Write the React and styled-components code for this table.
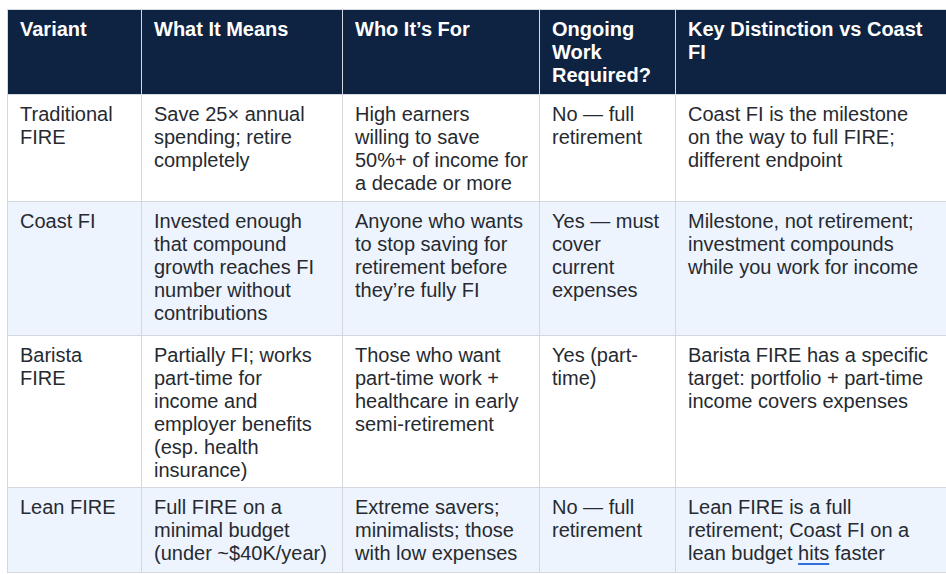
import React from 'react'
import styled, { createGlobalStyle } from 'styled-components'

const GlobalStyle = createGlobalStyle`
  html, body {
    margin: 0;
    padding: 0;
    background: #ffffff;
    overflow: hidden;
  }
  body {
    font-family: "Liberation Sans", Arial, sans-serif;
  }
`

const COLS = '134px 201px 197px 136px 275px'

const Page = styled.div`
  padding: 9px 0 0 7px;
  width: 1000px;
`

const Table = styled.div`
  display: flex;
  flex-direction: column;
  width: max-content;
  border-top: 1px solid #d3d7de;
  border-left: 1px solid #d3d7de;
`

const Row = styled.div`
  display: grid;
  grid-template-columns: ${COLS};
  height: ${(p) => p.$h}px;
  background: ${(p) => (p.$head ? '#0e2341' : p.$alt ? '#eef4fd' : '#ffffff')};
`

const Cell = styled.div`
  box-sizing: border-box;
  padding: 8px 12px 0 12px;
  border-right: 1px solid #d3d7de;
  border-bottom: 1px solid #d3d7de;
  font-size: 20px;
  line-height: 23px;
  color: #262a31;

  &:nth-child(3) {
    padding-right: 10px;
  }

  &:last-child {
    padding-right: 19px;
  }
`

const HeadCell = styled(Cell)`
  color: #ffffff;
  font-weight: 700;
`

const Flagged = styled.span`
  text-decoration: underline;
  text-decoration-color: #2f6fe0;
  text-decoration-thickness: 2px;
  text-underline-offset: 3px;
`

const headers = [
  'Variant',
  'What It Means',
  'Who It’s For',
  'Ongoing Work Required?',
  'Key Distinction vs Coast FI',
]

const rows = [
  {
    h: 107,
    cells: [
      'Traditional FIRE',
      'Save 25× annual spending; retire completely',
      'High earners willing to save 50%+ of income for a decade or more',
      'No — full retirement',
      'Coast FI is the milestone on the way to full FIRE; different endpoint',
    ],
  },
  {
    h: 134,
    alt: true,
    cells: [
      'Coast FI',
      'Invested enough that compound growth reaches FI number without contributions',
      'Anyone who wants to stop saving for retirement before they’re fully FI',
      'Yes — must cover current expenses',
      'Milestone, not retirement; investment compounds while you work for income',
    ],
  },
  {
    h: 152,
    cells: [
      'Barista FIRE',
      'Partially FI; works part-time for income and employer benefits (esp. health insurance)',
      'Those who want part-time work + healthcare in early semi-retirement',
      'Yes (part-time)',
      'Barista FIRE has a specific target: portfolio + part-time income covers expenses',
    ],
  },
  {
    h: 85,
    alt: true,
    cells: [
      'Lean FIRE',
      'Full FIRE on a minimal budget (under ~$40K/year)',
      'Extreme savers; minimalists; those with low expenses',
      'No — full retirement',
      <>
        Lean FIRE is a full retirement; Coast FI on a lean budget <Flagged>hits</Flagged> faster
      </>,
    ],
  },
]

const App = () => {
  return (
    <>
      <GlobalStyle />
      <Page>
        <Table>
          <Row $h={85} $head>
            {headers.map((t) => (
              <HeadCell key={t}>{t}</HeadCell>
            ))}
          </Row>
          {rows.map((r, i) => (
            <Row key={i} $h={r.h} $alt={r.alt}>
              {r.cells.map((c, j) => (
                <Cell key={j}>{c}</Cell>
              ))}
            </Row>
          ))}
        </Table>
      </Page>
    </>
  )
}

export default App
